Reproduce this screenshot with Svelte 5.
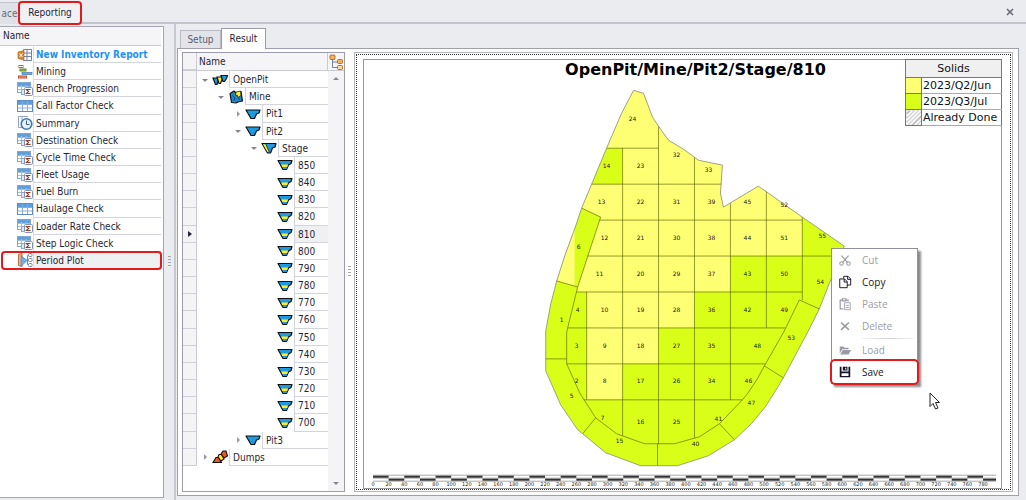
<script>
  const reports = [
    { name: 'New Inventory Report', icon: 'inventory', lead: true },
    { name: 'Mining', icon: 'mining' },
    { name: 'Bench Progression', icon: 'sigma' },
    { name: 'Call Factor Check', icon: 'table' },
    { name: 'Summary', icon: 'clock' },
    { name: 'Destination Check', icon: 'sigma' },
    { name: 'Cycle Time Check', icon: 'sigma' },
    { name: 'Fleet Usage', icon: 'sigma' },
    { name: 'Fuel Burn', icon: 'sigma' },
    { name: 'Haulage Check', icon: 'table' },
    { name: 'Loader Rate Check', icon: 'sigma' },
    { name: 'Step Logic Check', icon: 'sigma' },
    { name: 'Period Plot', icon: 'plot' }
  ];
  const benches = [850, 840, 830, 820, 810, 800, 790, 780, 770, 760, 750, 740, 730, 720, 710, 700];
  const tree = [
    { name: 'OpenPit', level: 0, icon: 'openpit', open: true },
    { name: 'Mine', level: 1, icon: 'mine', open: true },
    { name: 'Pit1', level: 2, icon: 'pit', open: false },
    { name: 'Pit2', level: 2, icon: 'pit', open: true },
    { name: 'Stage', level: 3, icon: 'stage', open: true },
    ...benches.map((b) => ({ name: String(b), level: 4, icon: 'bench' })),
    { name: 'Pit3', level: 2, icon: 'pit', open: false },
    { name: 'Dumps', level: 0, icon: 'dumps', open: false }
  ];
  const menu = [
    { name: 'Cut', icon: 'cut', off: true },
    { name: 'Copy', icon: 'copy' },
    { name: 'Paste', icon: 'paste', off: true },
    { name: 'Delete', icon: 'delete', off: true },
    { name: 'Load', icon: 'load', off: true, split: true },
    { name: 'Save', icon: 'save' }
  ];
  let current = $state('Period Plot');
  let picked = $state('810');

  const outline = '634,89 644,92 653,116 659,125 669,139 684,148 699,159 723,164 721,192 724,206 759,185 803,216 845,245 831,280 820,308 809,330 784,377 778,387 766,406 752,423 735,439 709,455 678,465 641,465 606,452 583,433 578,429 561,404 546,370 546,330 551,303 557,280 565,255 576,225 582,207 592,183 607,147 622,112';
  const yellow = '634,89 644,92 653,116 659,125 669,139 684,148 699,159 723,164 721,192 724,206 759,185 803,216 803,255 731,255 731,291 695,291 695,327 659,327 659,363 623,363 623,399 587,399 587,291 577,291 578,286 601,216 582,207 592,183 607,147 622,112';
  const cells = 'M582 207L601 216L578 286L568 327L567 332V363L580 392L596 417L617 433L645 443H675L700 436L720 423L743 399L748 393L758 378L765 365L785 330L800 299L820 308M557 280L578 286M546 358H567M596 417L583 433M658 443V465M720 423L735 439M765 365L784 377M587 291V399M623 147V435M659 125V443M695 156V437M731 202V399M767 190V327M803 216V299M607 147H659M592 183H722M600 219H803M588 255H841M577 291H803M568 327H786M567 363H766M584 399H743';
  const labels = [
    [24, 633, 118], [14, 607, 165], [23, 641, 165], [32, 677, 154], [33, 709, 169],
    [13, 602, 201], [22, 641, 201], [31, 677, 201], [39, 712, 201], [45, 748, 201], [52, 785, 204],
    [6, 579, 246], [12, 605, 237], [21, 641, 237], [30, 677, 237], [38, 712, 237], [44, 748, 237], [51, 785, 237], [55, 823, 235],
    [11, 600, 273], [20, 641, 273], [29, 677, 273], [37, 712, 273], [43, 748, 273], [50, 785, 273], [54, 821, 281],
    [1, 562, 319], [4, 578, 309], [10, 605, 309], [19, 641, 309], [28, 677, 309], [36, 712, 309], [42, 748, 309], [49, 785, 309],
    [3, 577, 345], [9, 605, 345], [18, 641, 345], [27, 677, 345], [35, 712, 345], [48, 758, 345], [53, 792, 337],
    [2, 577, 380], [8, 605, 380], [17, 641, 380], [26, 677, 380], [34, 712, 380], [46, 749, 380],
    [5, 572, 395], [7, 603, 417], [15, 620, 440], [16, 641, 421], [25, 677, 421], [41, 719, 418], [40, 696, 443], [47, 752, 402]
  ];
  const ticks = Array.from({ length: 40 }, (_, i) => ({ value: i * 20, x: 373 + (i * 611) / 39 }));
  const step = 611 / 39;
</script>

{#snippet grid()}
  <rect x=".5" y="1.500" width="13" height="10" fill="#fff" stroke="#7fa6d0" />
  <rect x="1" y="2" width="12" height="3" fill="#5f9fdc" />
  <path d="M1 5.500H13M1 8.500H13M4.500 4V11M9 4V11" stroke="#9dbfe2" fill="none" />
{/snippet}

{#snippet icon(kind)}
  <svg class="icon" viewBox="0 0 16 16" aria-hidden="true">
    {#if kind === 'inventory'}
      <path d="M6.500 2.500H14.500V13.500H6.500ZM6.500 6H14.500M6.500 9.500H14.500M10 2.500V13.500" fill="#fff" stroke="#7182a6" />
      <path d="M1 5L7 3.500V13L1 11.500Z" fill="#d98a2b" stroke="#a86012" stroke-width=".6" />
      <path d="M2.500 6.500L5.500 10M5.500 6.500L2.500 10" stroke="#fff" />
    {:else if kind === 'mining'}
      <rect x="2" y="1.500" width="4" height="2" fill="#fff" stroke="#d05a2b" />
      <rect x="3" y="5" width="6" height="2" fill="#98b83c" stroke="#708c2a" />
      <rect x="5" y="8.500" width="10" height="2" fill="#63a9e0" stroke="#3f7fb8" stroke-width=".7" />
      <rect x="1.500" y="12" width="8" height="2" fill="#f1a08a" stroke="#c84b30" />
    {:else if kind === 'sigma'}
      {@render grid()}
      <rect x="4.500" y="8.500" width="6" height="5" fill="#dfe9f5" stroke="#8fa8cc" />
      <rect x="7.500" y="6.500" width="8" height="8" rx="1" fill="#fff" stroke="#7d93b6" />
      <path d="M13.500 8.500H9.500L11.500 10.500L9.500 12.500H13.500" fill="none" stroke="#9a3a22" stroke-width="1.200" />
    {:else if kind === 'table'}
      <rect x=".5" y="2.500" width="15" height="11" fill="#fff" stroke="#5f8dc2" />
      <rect x="1" y="3" width="14" height="3" fill="#5a9fe0" />
      <path d="M1 6.500H15M1 10H15M5.500 3V13M10.500 3V13" stroke="#86aedb" fill="none" />
    {:else if kind === 'clock'}
      <path d="M1.500 1.500H11M1.500 1.500V12.500H5M5 1.500V12" fill="none" stroke="#8fa6c6" />
      <circle cx="9.500" cy="9" r="5.300" fill="#e5f2fc" stroke="#3e78ad" stroke-width="1.600" />
      <path d="M9.500 5.500V9.500H12.500" fill="none" stroke="#38618c" />
    {:else if kind === 'plot'}
      <path d="M1.500 2.500L5 1.500V14.500L1.500 13.500Z" fill="#f5b48c" stroke="#c9673a" />
      <path d="M4 3.500L10 8.500L4 14.500Z" fill="#6bb0e6" stroke="#4587bd" stroke-width=".7" />
      <path d="M9 8H12M10.500 3.500V12.500M10.500 3.500H12M10.500 12.500H12" fill="none" stroke="#7585a0" />
      <rect x="11.500" y="1.500" width="3.500" height="3" rx="1" fill="#fff" stroke="#7585a0" />
      <rect x="11.500" y="6.500" width="3.500" height="3" rx="1" fill="#fff" stroke="#7585a0" />
      <rect x="11.500" y="11.500" width="3.500" height="3" rx="1" fill="#fff" stroke="#7585a0" />
    {:else if kind === 'pit'}
      <path d="M1 4H15L14 7L11.500 8L9.500 12.500H6Z" fill="#1e9be0" stroke="#111" stroke-width="1.200" stroke-linejoin="round" />
    {:else if kind === 'bench'}
      <path d="M1 3.500H15L14 6.500L11.500 8L9.500 12.500H6Z" fill="#1e9be0" stroke="#111" stroke-width="1.200" stroke-linejoin="round" />
      <path d="M4.200 7.500H11L10.300 10H5.300Z" fill="#ffed22" />
      <path d="M5.600 10.300H10L9.400 12H6.400Z" fill="#1e9be0" />
    {:else if kind === 'stage'}
      <path d="M1 3.500H15L14 7L11.500 8L9.500 13H6.500Z" fill="#1e9be0" stroke="#111" stroke-width="1.200" stroke-linejoin="round" />
      <path d="M2 4.200H4.800L8.300 12H6.500Z" fill="#ffed22" />
      <path d="M4.800 4L8.300 12" fill="none" stroke="#111" stroke-width=".8" />
    {:else if kind === 'openpit'}
      <path d="M1 6H7L6 8.500L5 12.500H3.500Z" fill="#1e9be0" stroke="#111" stroke-width="1.200" />
      <path d="M5 5H11L10 7.500L8.500 11.500H7Z" fill="#ffed22" stroke="#111" stroke-width="1.200" />
      <path d="M9 3.500H15.500L14.500 6.500L12.500 9.500H11Z" fill="#1e9be0" stroke="#111" stroke-width="1.200" />
    {:else if kind === 'mine'}
      <path d="M2 4.500L6 2L8 4L13 2.500L14.500 12L10 13L8 14L3.500 13.500Z" fill="#1e86c8" stroke="#111" stroke-width="1.200" stroke-linejoin="round" />
      <path d="M8 3L12.500 2L13 6.500L10 8.500L9.500 6.500L7.500 6Z" fill="#ffed22" stroke="#111" stroke-width=".7" />
      <path d="M4.500 6.500L7 9L6 11.500M10 10H12" fill="none" stroke="#0b3d68" stroke-width=".9" />
    {:else if kind === 'dumps'}
      <path d="M9 5L11 2H14L15.500 7L12 9Z" fill="#f2551f" stroke="#111" stroke-width="1.100" />
      <path d="M5.500 9L7 5.500H9.500L12 10L9 12Z" fill="#ffed22" stroke="#111" stroke-width="1.100" />
      <path d="M1 13.500L4 8.500H6.500L9.500 13.500Z" fill="#f2551f" stroke="#111" stroke-width="1.100" />
    {:else if kind === 'hierarchy'}
      <path d="M4.500 5V13.500H10M4.500 8H10" fill="none" stroke="#77809a" />
      <rect x="2" y="1" width="5" height="4.500" rx="1" fill="#f5b25c" stroke="#b96e20" />
      <rect x="9.500" y="5.500" width="5" height="4" rx="1" fill="#f5b25c" stroke="#b96e20" />
      <rect x="9.500" y="11.500" width="5" height="4" rx="1" fill="#fbd9a0" stroke="#b96e20" />
    {:else if kind === 'cut'}
      <path d="M4 3L11 11M12 3L5 11" stroke="currentColor" stroke-width="1.400" fill="none" />
      <circle cx="4" cy="12" r="2" fill="none" stroke="currentColor" stroke-width="1.200" />
      <circle cx="12" cy="12" r="2" fill="none" stroke="currentColor" stroke-width="1.200" />
    {:else if kind === 'copy'}
      <path d="M6.500 4V1.500H11.500L14.500 4.500V11.500H10.500M11 1.500V5H14.500" fill="none" stroke="currentColor" stroke-width="1.100" />
      <path d="M2 4.500H7.500L10.500 7.500V14.500H2ZM7 4.500V8H10.500" fill="none" stroke="currentColor" stroke-width="1.100" />
    {:else if kind === 'paste'}
      <path d="M6 13.500H2.500V3.500H4.500M9.500 3.500H11.500V5M5 2H9V4.500H5Z" fill="none" stroke="currentColor" stroke-width="1.400" />
      <path d="M7.500 6.500H14V14.500H7.500ZM9 9.500H12.500M9 12H12.500" fill="none" stroke="currentColor" />
    {:else if kind === 'delete'}
      <path d="M3.500 4L12.500 12.500M12.500 4L3.500 12.500" stroke="currentColor" stroke-width="1.800" fill="none" />
    {:else if kind === 'load'}
      <path d="M2 12V4H6L7.500 5.500H12V7H5Z" fill="currentColor" />
      <path d="M5.500 8H15L12 13H2.500Z" fill="currentColor" />
    {:else if kind === 'save'}
      <path d="M2 2H4V7.500H12V2H14V14H2ZM4 9.300V12.500H12V9.300Z" fill="currentColor" fill-rule="evenodd" />
      <path d="M5.500 2H10.800V6.300H5.500ZM8.200 3V5.200H9.500V3Z" fill="currentColor" fill-rule="evenodd" />
    {/if}
  </svg>
{/snippet}

<div class="app">
  <nav class="strip">
    <button class="doc side">ace</button>
    <button class="doc active marked">Reporting</button>
    <button class="close" aria-label="Close">
      <svg viewBox="0 0 8 8"><path d="M1 1L7 7M7 1L1 7" stroke="#6a6a76" stroke-width="1.600" /></svg>
    </button>
  </nav>

  <div class="body">
    <aside class="reports">
      <div class="head">Name</div>
      <ul>
        {#each reports as r}
          <li>
            <button class="report" class:lead={r.lead} class:current={current === r.name} class:marked={r.icon === 'plot'} onclick={() => (current = r.name)}>
              {@render icon(r.icon)}
              <span class="cell">{r.name}</span>
            </button>
          </li>
        {/each}
      </ul>
    </aside>
    <div class="splitter outer"><i></i></div>

    <main>
      <div class="tabs">
        <button class="tab">Setup</button>
        <button class="tab on">Result</button>
      </div>
      <div class="page">
        <section class="tree">
          <div class="tree-head">
            <span class="gutter"></span>
            <span class="title">Name</span>
            <button class="chooser" aria-label="Columns">{@render icon('hierarchy')}</button>
          </div>
          <div class="tree-body">
            <ul>
              {#each tree as n}
                <li>
                  <span class="gutter">{#if picked === n.name}<svg viewBox="0 0 4 6"><path d="M0 0L4 3L0 6Z" fill="#23233a" /></svg>{/if}</span>
                  <button class="node l{n.level}" class:picked={picked === n.name} onclick={() => (picked = n.name)}>
                    <span class="twist">
                      {#if n.open === true}<svg viewBox="0 0 6 6"><path d="M0 2H6L3 5Z" fill="#85858f" /></svg>
                      {:else if n.open === false}<svg viewBox="0 0 6 6"><path d="M2 0L5 3L2 6Z" fill="#9a9aa4" /></svg>{/if}
                    </span>
                    {@render icon(n.icon)}
                    <span class="cell">{n.name}</span>
                  </button>
                </li>
              {/each}
            </ul>
            <div class="scroll">
              <svg viewBox="0 0 6 6"><path d="M0 4H6L3 1Z" fill="#85858f" /></svg>
              <svg viewBox="0 0 6 6"><path d="M0 2H6L3 5Z" fill="#85858f" /></svg>
            </div>
          </div>
        </section>
        <div class="splitter"><i></i></div>

        <section class="plot">
          <div class="canvas">
            <h1>OpenPit/Mine/Pit2/Stage/810</h1>
            <svg class="map" viewBox="364 80 638 406" role="img" aria-label="Solids by period">
              <polygon points={outline} fill="#d9ff19" />
              <polygon points={yellow} fill="#ffff73" />
              <polygon points="607,147 623,147 623,183 592,183" fill="#d9ff19" />
              <polygon points="575,228 575,285 557,280 565,255" fill="#ffff73" />
              <path d={cells} class="lines" />
              <polygon points={outline} class="edge" />
              {#each labels as [n, x, y]}
                <text {x} y={y + 2}>{n}</text>
              {/each}
              <path d="M373 474.500H997M373 477.500H997M373 480.500H997" stroke="#aaa" fill="none" />
              {#each ticks as t, i}
                <rect x={t.x} y={i % 2 ? 478 : 475} width={Math.min(step, 997 - t.x)} height="2" fill="#333" />
                <text class="tick" x={t.x} y="485">{t.value}</text>
              {/each}
            </svg>
            <table class="legend">
              <thead><tr><th colspan="2">Solids</th></tr></thead>
              <tbody>
                <tr><td class="key yellow"></td><td>2023/Q2/Jun</td></tr>
                <tr><td class="key lime"></td><td>2023/Q3/Jul</td></tr>
                <tr><td class="key hatch"></td><td>Already Done</td></tr>
              </tbody>
            </table>
          </div>
          <ul class="menu">
            {#each menu as m}
              <li class:split={m.split}>
                <button disabled={m.off} class:marked={m.icon === 'save'}>{@render icon(m.icon)}<span>{m.name}</span></button>
              </li>
            {/each}
          </ul>
          <svg class="pointer" viewBox="0 0 12 18" aria-hidden="true">
            <path d="M1 1V14.500L4 11.500L6.500 17L9 16L6.500 10.500H10.500Z" fill="#fff" stroke="#222" />
          </svg>
        </section>
      </div>
    </main>
  </div>
</div>

<style>
  :global(body) { margin: 0; }
  * { box-sizing: border-box; }
  .app {
    height: 100vh; display: flex; flex-direction: column; overflow: hidden;
    background: #ebecef; color: #1f1f35;
    font: 10px/14px "DejaVu Sans Condensed", "DejaVu Sans", sans-serif;
    font-stretch: condensed;
  }
  button { font: inherit; color: inherit; background: none; border: 0; padding: 0; margin: 0; text-align: left; }
  ul { list-style: none; margin: 0; padding: 0; }
  .icon { width: 16px; height: 16px; flex: none; display: block; }

  .strip { display: flex; flex: none; height: 24px; padding-top: 2px; border-bottom: 2px solid #c3c4cb; }
  .doc { height: 22px; white-space: nowrap; text-align: center; }
  .side { width: 19px; color: #6a6a78; background: #e0e1e6; border-top: 1px solid #c3c4cb; }
  .marked { outline: 2px solid #e3191b; outline-offset: -1px; border-radius: 3px; position: relative; z-index: 1; }
  .doc.active { background: #f1f1f4; width: 62px; }
  .close { margin-left: auto; margin-right: 12px; width: 8px; }
  .close svg { width: 8px; height: 8px; display: block; }

  .body { flex: 1; display: flex; min-height: 0; }
  .reports { flex: none; width: 164px; margin: 2px 0 2px; background: #fff; border: 1px solid #a6a6b2; border-left: 0; padding-right: 2px; }
  .head { height: 19px; line-height: 18px; padding-left: 3px; background: #f5f5f7; border-bottom: 1px solid #c9cad2; }
  .reports ul { height: 223px; display: flex; flex-direction: column; }
  .reports li { flex: 1; display: flex; min-height: 0; }
  .report { flex: 1; display: flex; align-items: center; padding-left: 17px; min-width: 0; }
  .report .cell { flex: 1; align-self: stretch; line-height: 17px; padding-left: 2px; border-left: 1px solid #dcdce3; border-bottom: 1px solid #d3d4dc; white-space: nowrap; }
  .lead { color: #1e90f5; font-weight: bold; }
  .current .cell { background: #eff0f2; }
  .report.marked { margin-left: 2px; padding-left: 15px; }

  .splitter { flex: none; width: 9px; display: flex; align-items: center; justify-content: center; }
  .splitter i { width: 3px; height: 12px; background: repeating-linear-gradient(#a5a5b0 0 1px, transparent 1px 3px); }
  .splitter.outer { width: 12px; border-right: 2px solid #c6c7cf; }

  main { flex: 1; min-width: 0; display: flex; flex-direction: column; padding: 4px 7px 4px 1px; }
  .tabs { display: flex; flex: none; align-items: flex-end; height: 20px; padding-left: 3px; }
  .tab { height: 18px; width: 41px; text-align: center; color: #5d5d6c; border: 1px solid #b9bac3; border-bottom: 0; background: #e3e4e9; }
  .tab.on { height: 21px; width: 45px; margin-bottom: -1px; background: #fff; color: #1f1f35; border-color: #9b9ba9; position: relative; z-index: 1; }
  .page { flex: 1; min-height: 0; display: flex; background: #fff; border: 1px solid #a0a0ad; padding: 3px 5px 3px 4px; }

  .tree { flex: none; width: 163px; display: flex; flex-direction: column; border: 1px solid #9b9ba9; }
  .tree-head { height: 18px; flex: none; display: flex; background: #f5f5f7; border-bottom: 1px solid #c9cad2; line-height: 17px; }
  .gutter { flex: none; width: 14px; background: #f4f4f6; border-right: 1px solid #c9cad2; border-bottom: 1px solid #d0d1d8; display: flex; align-items: center; justify-content: center; }
  .gutter svg { width: 4px; height: 6px; }
  .title { flex: 1; padding-left: 2px; }
  .chooser { width: 17px; border-left: 1px solid #c9cad2; }
  .tree-body { flex: 1; min-height: 0; display: flex; }
  .tree-body ul { flex: 1; height: 395px; display: flex; flex-direction: column; }
  .tree-body li { flex: 1; min-height: 0; display: flex; }
  .node { flex: 1; display: flex; align-items: center; min-width: 0; }
  .l1 { padding-left: 16px; }
  .l2 { padding-left: 33px; }
  .l3 { padding-left: 49px; }
  .l4 { padding-left: 65px; }
  .twist { width: 15px; display: flex; justify-content: center; }
  .twist svg, .scroll svg { width: 6px; height: 6px; display: block; }
  .node .cell { flex: 1; align-self: stretch; margin-left: 1px; line-height: 17px; padding-left: 3px; border-left: 1px solid #d3d4dc; border-bottom: 1px solid #d3d4dc; }
  .picked .cell { background: #eff0f2; }
  .scroll { width: 16px; background: #f4f4f7; display: flex; flex-direction: column; justify-content: space-between; align-items: center; padding: 5px 0; }

  .plot { flex: 1; min-width: 0; display: flex; position: relative; border: 1px solid #b4b4bf; padding: 2px; }
  .plot::before { content: ""; position: absolute; inset: 1px; border: 1px dotted #333; pointer-events: none; }
  .canvas { flex: 1; min-width: 0; display: flex; flex-direction: column; position: relative; margin: 4px 8px 0 6px; border: 1px solid #999; }
  h1 { margin: 0; height: 20px; flex: none; font: bold 16px/20px "DejaVu Sans", sans-serif; color: #000; text-align: center; padding-left: 26px; }
  .map { flex: 1; min-height: 0; width: 100%; display: block; }
  .lines { fill: none; stroke: #5a6400; stroke-opacity: .65; stroke-width: 1; }
  .edge { fill: none; stroke: #8a8a78; stroke-opacity: .8; stroke-width: 1; }
  .map text { font: 6px "DejaVu Sans", sans-serif; text-anchor: middle; fill: #222; }
  .map text.tick { font-size: 5px; }
  .legend { position: absolute; top: -1px; right: -1px; width: 97px; border-collapse: collapse; background: #fff; color: #111; font: 11px/14px "DejaVu Sans", sans-serif; }
  .legend th { font-weight: normal; background: #f0f0f0; height: 18px; padding: 0; border: 1px solid #777; }
  .legend td { border: 1px solid #aaa; border-right-color: #777; height: 16px; padding: 0 0 0 1px; white-space: nowrap; }
  .legend td.key { width: 16px; padding: 0; border-color: #777; }
  .yellow { background: #ffff73; }
  .lime { background: #d9ff19; }
  .hatch { background: repeating-linear-gradient(135deg, #fff 0 2px, #aaa 2px 3px); }

  .menu { position: absolute; left: 476px; top: 195px; width: 87px; background: #fff; border: 1px solid #8f8f9e; box-shadow: 3px 3px 2px rgba(0, 0, 0, .45); font: 10px/16px "Open Sans", "Noto Sans", sans-serif; color: #15152a; z-index: 2; }
  .menu button { display: flex; align-items: center; width: 100%; height: 22px; padding-left: 6px; gap: 10px; }
  .menu button:disabled { color: #9b9ba6; }
  .menu .icon { width: 14px; height: 14px; }
  .menu .split { padding-top: 2px; background: linear-gradient(90deg, #f2f2f5, #cfcfd8, #f2f2f5) 30px 1px / 52px 1px no-repeat; }
  .menu .marked { outline-offset: 0; }
  .pointer { position: absolute; left: 574px; top: 339px; width: 12px; height: 18px; z-index: 2; }
</style>
